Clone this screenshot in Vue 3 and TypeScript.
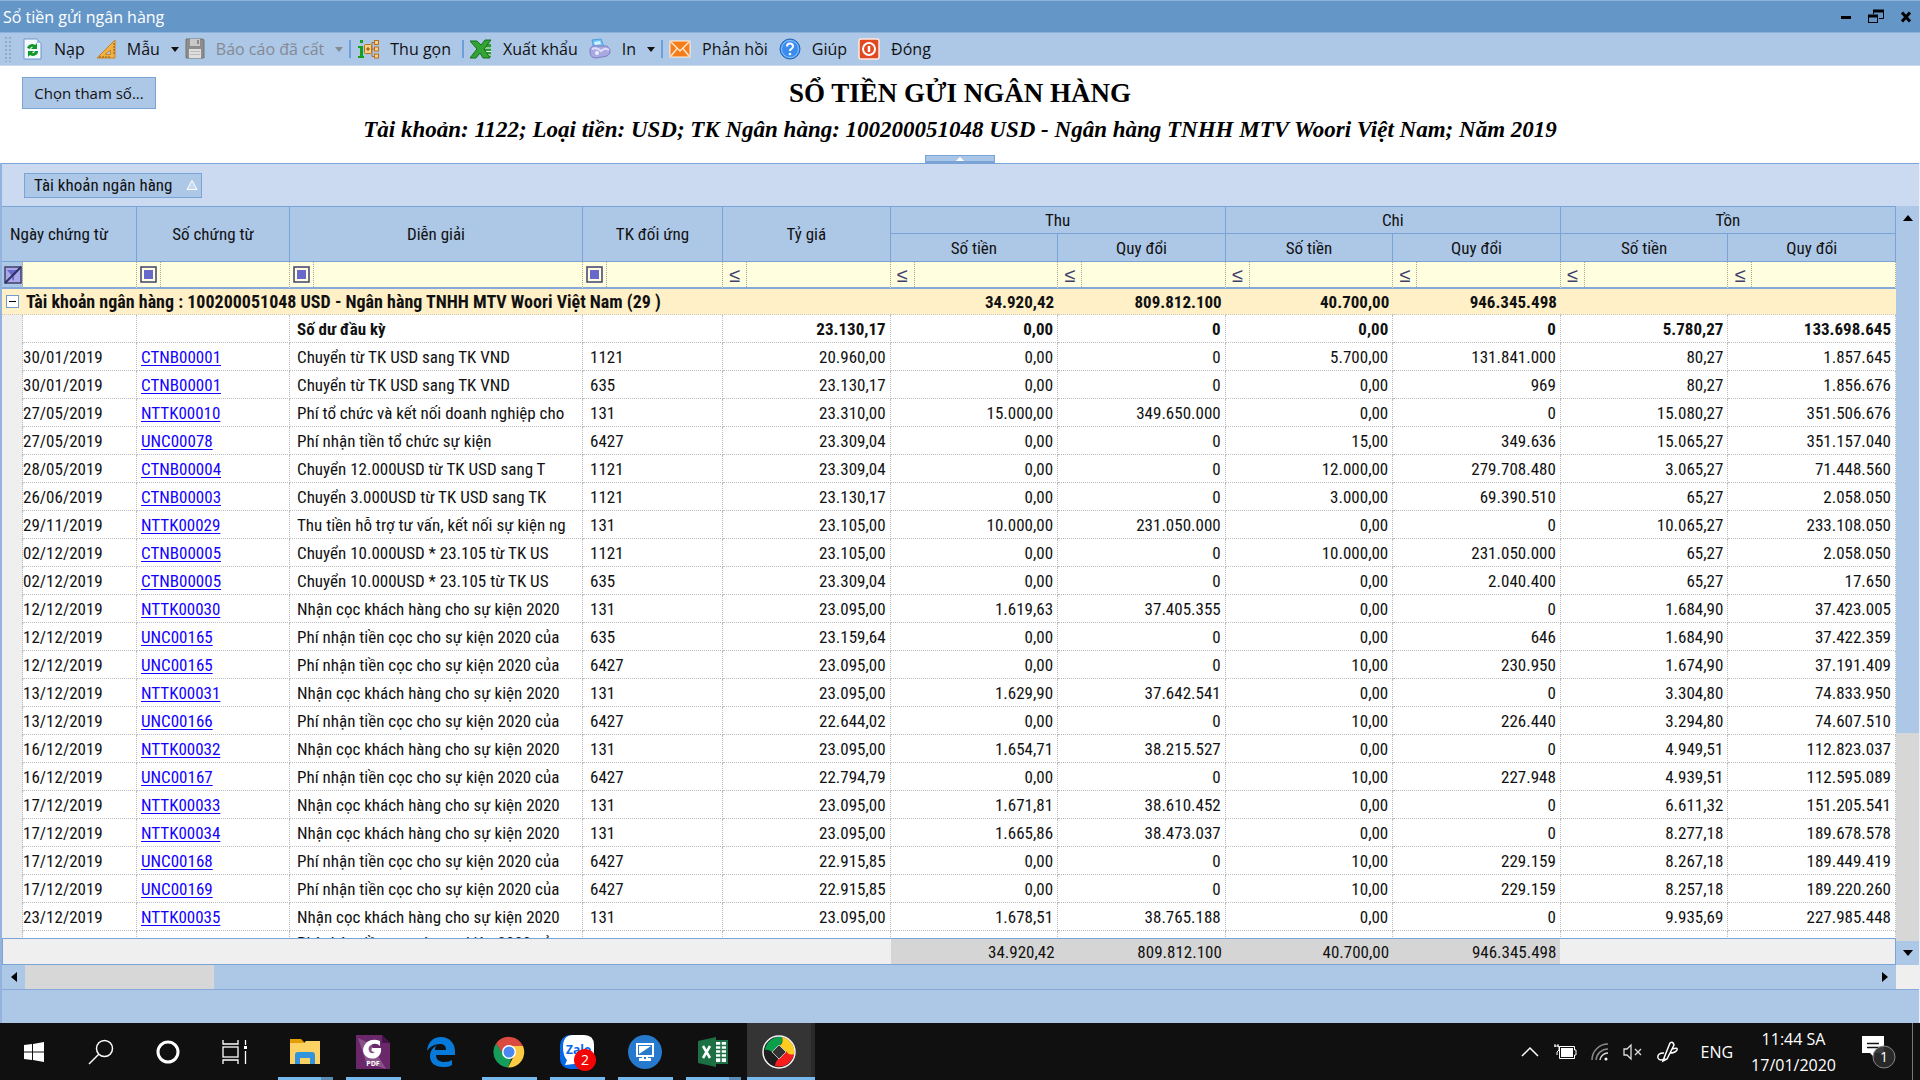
<script setup lang="ts">
interface Row {
  date: string
  doc: string
  desc: string
  account: string
  values: string[]
}

const line = (date: string, doc: string, desc: string, account: string, numbers: string): Row => ({
  date,
  doc,
  desc,
  account,
  values: numbers.split(' '),
})

const toUsd = 'Chuyển từ TK USD sang TK VND'
const deposit = 'Nhận cọc khách hàng cho sự kiện 2020'
const fee = 'Phí nhận tiền cọc cho sự kiện 2020 của'

const rows: Row[] = [
  line('30/01/2019', 'CTNB00001', toUsd, '1121', '20.960,00 0,00 0 5.700,00 131.841.000 80,27 1.857.645'),
  line('30/01/2019', 'CTNB00001', toUsd, '635', '23.130,17 0,00 0 0,00 969 80,27 1.856.676'),
  line('27/05/2019', 'NTTK00010', 'Phí tổ chức và kết nối doanh nghiệp cho', '131', '23.310,00 15.000,00 349.650.000 0,00 0 15.080,27 351.506.676'),
  line('27/05/2019', 'UNC00078', 'Phí nhận tiền tổ chức sự kiện', '6427', '23.309,04 0,00 0 15,00 349.636 15.065,27 351.157.040'),
  line('28/05/2019', 'CTNB00004', 'Chuyển 12.000USD từ TK USD sang T', '1121', '23.309,04 0,00 0 12.000,00 279.708.480 3.065,27 71.448.560'),
  line('26/06/2019', 'CTNB00003', 'Chuyển 3.000USD từ TK USD sang TK', '1121', '23.130,17 0,00 0 3.000,00 69.390.510 65,27 2.058.050'),
  line('29/11/2019', 'NTTK00029', 'Thu tiền hỗ trợ tư vấn, kết nối sự kiện ng', '131', '23.105,00 10.000,00 231.050.000 0,00 0 10.065,27 233.108.050'),
  line('02/12/2019', 'CTNB00005', 'Chuyển 10.000USD * 23.105 từ TK US', '1121', '23.105,00 0,00 0 10.000,00 231.050.000 65,27 2.058.050'),
  line('02/12/2019', 'CTNB00005', 'Chuyển 10.000USD * 23.105 từ TK US', '635', '23.309,04 0,00 0 0,00 2.040.400 65,27 17.650'),
  line('12/12/2019', 'NTTK00030', deposit, '131', '23.095,00 1.619,63 37.405.355 0,00 0 1.684,90 37.423.005'),
  line('12/12/2019', 'UNC00165', fee, '635', '23.159,64 0,00 0 0,00 646 1.684,90 37.422.359'),
  line('12/12/2019', 'UNC00165', fee, '6427', '23.095,00 0,00 0 10,00 230.950 1.674,90 37.191.409'),
  line('13/12/2019', 'NTTK00031', deposit, '131', '23.095,00 1.629,90 37.642.541 0,00 0 3.304,80 74.833.950'),
  line('13/12/2019', 'UNC00166', fee, '6427', '22.644,02 0,00 0 10,00 226.440 3.294,80 74.607.510'),
  line('16/12/2019', 'NTTK00032', deposit, '131', '23.095,00 1.654,71 38.215.527 0,00 0 4.949,51 112.823.037'),
  line('16/12/2019', 'UNC00167', fee, '6427', '22.794,79 0,00 0 10,00 227.948 4.939,51 112.595.089'),
  line('17/12/2019', 'NTTK00033', deposit, '131', '23.095,00 1.671,81 38.610.452 0,00 0 6.611,32 151.205.541'),
  line('17/12/2019', 'NTTK00034', deposit, '131', '23.095,00 1.665,86 38.473.037 0,00 0 8.277,18 189.678.578'),
  line('17/12/2019', 'UNC00168', fee, '6427', '22.915,85 0,00 0 10,00 229.159 8.267,18 189.449.419'),
  line('17/12/2019', 'UNC00169', fee, '6427', '22.915,85 0,00 0 10,00 229.159 8.257,18 189.220.260'),
  line('23/12/2019', 'NTTK00035', deposit, '131', '23.095,00 1.678,51 38.765.188 0,00 0 9.935,69 227.985.448'),
]

const opening: string[] = ['23.130,17', '0,00', '0', '0,00', '0', '5.780,27', '133.698.645']
const totals: string[] = ['34.920,42', '809.812.100', '40.700,00', '946.345.498', '', '']
const groups: string[] = ['Thu', 'Chi', 'Tồn']
const textFilters: string[] = ['Số chứng từ', 'Diễn giải', 'TK đối ứng']
const numberFilters: string[] = ['Tỷ giá', 'Thu số tiền', 'Thu quy đổi', 'Chi số tiền', 'Chi quy đổi', 'Tồn số tiền', 'Tồn quy đổi']
</script>

<template>
  <div class="desktop">
    <header class="titlebar">
      <span>Sổ tiền gửi ngân hàng</span>
      <div class="window-buttons">
        <button type="button" aria-label="Thu nhỏ">
          <svg width="18" height="18"><path d="M4 9.500H14" stroke="#000" stroke-width="3" /></svg>
        </button>
        <button type="button" aria-label="Khôi phục">
          <svg width="18" height="18" fill="none" stroke="#000">
            <path d="M6.500 6V3H16.500V10.500H12" /><path d="M6 3H17" stroke-width="3" />
            <rect x="1.500" y="7.500" width="9" height="7" /><path d="M1 8H11" stroke-width="3" />
          </svg>
        </button>
        <button type="button" aria-label="Đóng cửa sổ">
          <svg width="18" height="18"><path d="M5 4.500L13 13.500M13 4.500L5 13.500" stroke="#000" stroke-width="3" /></svg>
        </button>
      </div>
    </header>

    <nav class="toolbar">
      <span class="grip"></span>
      <button type="button">
        <svg width="20" height="22" viewBox="0 0 20 22">
          <path d="M1 1H14L18 5V21H1Z" fill="#f5faff" stroke="#6d94cf" />
          <path d="M14 1V5H18Z" fill="#9dbbe8" />
          <path d="M4 10A5 4.500 0 0 1 12 7L14 5V11H8L10 9Q8 8 7 11ZM15 13A5 4.500 0 0 1 7 17L5 19V13H11L9 15Q11 16 12 13Z" fill="#12972a" />
        </svg>
        Nạp
      </button>
      <button type="button" class="has-caret">
        <svg width="20" height="22" viewBox="0 0 20 22">
          <path d="M19 2V20H1Z" fill="#f1b043" stroke="#c98422" />
          <path d="M14.500 12V16.500H9Z" fill="#adc7e7" stroke="#c98422" />
          <path d="M4 20v-2M7 20v-2M10 20v-2M13 20v-2M17 6h2M17 9h2M17 12h2M17 15h2" stroke="#8a5a10" />
        </svg>
        Mẫu
        <i class="caret"></i>
      </button>
      <button type="button" class="has-caret" disabled>
        <svg width="20" height="22" viewBox="0 0 20 22">
          <path d="M1 1H18L19 2V20H1Z" fill="#8d8d8d" stroke="#747474" />
          <path d="M5 1H15V8H5Z" fill="#c9c9c9" /><path d="M12 2h2v4h-2z" fill="#8a8a8a" />
          <path d="M4 11H16V20H4Z" fill="#dedede" /><path d="M5 13.500H15M5 16.500H15" stroke="#bbb" />
        </svg>
        Báo cáo đã cất
        <i class="caret"></i>
      </button>
      <span class="divider"></span>
      <button type="button">
        <svg width="22" height="22" viewBox="0 0 22 22">
          <path d="M3 2h3v3H3zM1 8H6V18H7V20H1V18H3V10H1Z" fill="#15a01b" />
          <path d="M14 11H18M15 11V4.500H18M15 11V18.500H18" fill="none" stroke="#b86f1d" />
          <rect x="7.500" y="6.500" width="7" height="9" rx="1" fill="#f9d18b" stroke="#b86f1d" />
          <path d="M11 9v4M9 11h4" stroke="#8a4b08" />
          <g fill="#f9d18b" stroke="#b86f1d"><rect x="17.500" y="2.500" width="4" height="4" /><rect x="17.500" y="9" width="4" height="4" /><rect x="17.500" y="16" width="4" height="4" /></g>
        </svg>
        Thu gọn
      </button>
      <span class="divider"></span>
      <button type="button">
        <svg width="22" height="22" viewBox="0 0 22 22">
          <path d="M14 6H21V19H14Z" fill="#2f9a35" /><path d="M15 10h6M15 13.500h6M15 17h6" stroke="#e8ffe8" />
          <path d="M0 3H7L11 7L15 2H21L14 11L20 20H13L10 15L6 20H0L7 11Z" fill="#33a333" stroke="#15701c" />
        </svg>
        Xuất khẩu
      </button>
      <button type="button" class="has-caret">
        <svg width="22" height="22" viewBox="0 0 22 22">
          <path d="M3 2L12 1L15 9L5 11Z" fill="#6fc3f7" stroke="#4c9fe0" /><path d="M5 4l6-1 1 3-6 1z" fill="#d7f2ff" />
          <path d="M1 11Q3 7 8 8L18 8Q22 11 21 15Q19 19 13 19L7 20Q0 20 1 11Z" fill="#a9a9e2" stroke="#7f7fc2" />
          <path d="M3 11Q8 9 12 13Q16 9 20 12" fill="none" stroke="#dedefa" stroke-width="2" /><circle cx="8" cy="15" r="2" fill="#ececff" />
        </svg>
        In
        <i class="caret"></i>
      </button>
      <span class="divider"></span>
      <button type="button">
        <svg width="22" height="22" viewBox="0 0 22 22">
          <rect x="1" y="3" width="20" height="16" fill="#f57c1a" stroke="#fff3e2" />
          <path d="M2 4L11 13L20 4M2 18L8 10.500M20 18L14 10.500" fill="none" stroke="#ffe6c8" stroke-width="1.500" />
        </svg>
        Phản hồi
      </button>
      <button type="button">
        <svg width="22" height="22" viewBox="0 0 22 22">
          <circle cx="11" cy="11" r="10" fill="#3b8ded" stroke="#2463b5" /><circle cx="11" cy="11" r="8.500" fill="none" stroke="#8cc4ff" />
          <path d="M8 8.500Q8 5.500 11 5.500T14 8.300Q14 10 12.300 10.800Q11 11.500 11 13" fill="none" stroke="#fff" stroke-width="2" /><circle cx="11" cy="16" r="1.300" fill="#fff" />
        </svg>
        Giúp
      </button>
      <button type="button">
        <svg width="22" height="22" viewBox="0 0 22 22">
          <rect x="1" y="1" width="20" height="20" rx="2" fill="#e04a22" stroke="#ffe7de" stroke-width="1.500" />
          <circle cx="11" cy="11" r="6" fill="none" stroke="#fff" stroke-width="2" /><path d="M11 8V14" stroke="#fff" stroke-width="2.500" />
        </svg>
        Đóng
      </button>
    </nav>

    <section class="report-head">
      <button type="button" class="params">Chọn tham số...</button>
      <div class="titles">
        <h1>SỔ TIỀN GỬI NGÂN HÀNG</h1>
        <p>Tài khoản: 1122; Loại tiền: USD; TK Ngân hàng: 100200051048 USD - Ngân hàng TNHH MTV Woori Việt Nam; Năm 2019</p>
        <button type="button" class="collapse" aria-label="Thu gọn phần đầu"><i></i></button>
      </div>
    </section>

    <main class="sheet">
      <div class="group-panel">
        <button type="button" class="chip">
          Tài khoản ngân hàng
          <svg width="12" height="12"><path d="M6 1.500L11 10.500H1Z" fill="#c8daf2" stroke="#fff" /></svg>
        </button>
      </div>

      <div class="viewport">
        <div class="content">
          <div class="table-wrap">
            <table>
              <colgroup>
                <col class="c-gutter" /><col class="c-date" /><col class="c-doc" /><col class="c-desc" /><col class="c-acc" />
                <col v-for="n in 7" :key="n" />
              </colgroup>
              <thead>
                <tr class="h-top">
                  <th colspan="2" rowspan="2" class="first">Ngày chứng từ</th>
                  <th rowspan="2">Số chứng từ</th>
                  <th rowspan="2">Diễn giải</th>
                  <th rowspan="2">TK đối ứng</th>
                  <th rowspan="2">Tỷ giá</th>
                  <th v-for="g in groups" :key="g" colspan="2">{{ g }}</th>
                </tr>
                <tr class="h-sub">
                  <template v-for="g in groups" :key="g">
                    <th>Số tiền</th>
                    <th>Quy đổi</th>
                  </template>
                </tr>
                <tr class="filters">
                  <td class="clear">
                    <button type="button" aria-label="Xóa lọc">
                      <svg width="18" height="18">
                        <rect x="1" y="1" width="16" height="16" fill="#a9a9ea" stroke="#40406e" stroke-width="1.500" />
                        <path d="M3 4H15L10 10V15L8 13V10Z" fill="#6868c8" /><path d="M1 17L17 1" stroke="#303060" stroke-width="2" />
                      </svg>
                    </button>
                  </td>
                  <td><input type="text" aria-label="Lọc ngày chứng từ" /></td>
                  <td v-for="f in textFilters" :key="f">
                    <div class="filter">
                      <button type="button" :aria-label="'Kiểu lọc ' + f">
                        <svg width="17" height="17"><rect x="1" y="1" width="15" height="15" fill="none" stroke="#40406e" stroke-width="1.500" /><rect x="4" y="4" width="9" height="9" fill="#6868cc" /></svg>
                      </button>
                      <input type="text" :aria-label="'Lọc ' + f" />
                    </div>
                  </td>
                  <td v-for="f in numberFilters" :key="f">
                    <div class="filter">
                      <button type="button" :aria-label="'Kiểu lọc ' + f">≤</button>
                      <input type="text" :aria-label="'Lọc ' + f" />
                    </div>
                  </td>
                </tr>
              </thead>
              <tbody>
                <tr class="group">
                  <td colspan="6">
                    <div class="group-label">
                      <button type="button" aria-label="Thu gọn nhóm">
                        <svg width="13" height="13"><rect x="0.500" y="0.500" width="12" height="12" fill="#fff" stroke="#6f9bd1" /><path d="M3 6.500H10" stroke="#000" /></svg>
                      </button>
                      Tài khoản ngân hàng : 100200051048 USD - Ngân hàng TNHH MTV Woori Việt Nam (29 )
                    </div>
                  </td>
                  <td v-for="(t, i) in totals" :key="i" class="num">{{ t }}</td>
                </tr>
                <tr class="data opening">
                  <td class="gutter"></td>
                  <td></td>
                  <td></td>
                  <td class="text">Số dư đầu kỳ</td>
                  <td></td>
                  <td v-for="(v, i) in opening" :key="i" class="num">{{ v }}</td>
                </tr>
                <tr v-for="(r, i) in rows" :key="i" class="data">
                  <td class="gutter"></td>
                  <td>{{ r.date }}</td>
                  <td class="doc"><a href="#">{{ r.doc }}</a></td>
                  <td class="text">{{ r.desc }}</td>
                  <td class="text">{{ r.account }}</td>
                  <td v-for="(v, j) in r.values" :key="j" class="num">{{ v }}</td>
                </tr>
                <tr class="data partial">
                  <td class="gutter"></td>
                  <td></td>
                  <td></td>
                  <td class="text">{{ fee }}</td>
                  <td></td>
                  <td v-for="n in 7" :key="n"></td>
                </tr>
              </tbody>
            </table>
          </div>
          <table class="summary">
            <colgroup>
              <col class="c-gutter" /><col class="c-date" /><col class="c-doc" /><col class="c-desc" /><col class="c-acc" />
              <col v-for="n in 7" :key="n" />
            </colgroup>
            <tbody>
              <tr>
                <td colspan="6"></td>
                <td v-for="(t, i) in totals" :key="i" class="num" :class="{ filled: t }">{{ t }}</td>
              </tr>
            </tbody>
          </table>
          <div class="h-scroll">
            <button type="button" aria-label="Cuộn trái"><i class="left"></i></button>
            <span class="h-track"></span>
            <button type="button" aria-label="Cuộn phải"><i class="right"></i></button>
          </div>
        </div>
        <div class="v-scroll">
          <button type="button" aria-label="Cuộn lên"><i class="up"></i></button>
          <span class="v-thumb"></span>
          <span class="v-track"></span>
          <button type="button" aria-label="Cuộn xuống"><i class="down"></i></button>
          <span class="corner"></span>
        </div>
      </div>
    </main>

    <footer class="taskbar">
      <div class="system">
        <button type="button" aria-label="Start">
          <svg width="20" height="20" fill="#fff"><path d="M0 3L8 2V9.500H0ZM9 2L20 0V9.500H9ZM0 10.500H8V18L0 17ZM9 10.500H20V20L9 18Z" /></svg>
        </button>
        <button type="button" aria-label="Tìm kiếm">
          <svg width="26" height="26" fill="none" stroke="#fff" stroke-width="1.500"><circle cx="16.500" cy="9.500" r="8" /><path d="M11 15L1 25" /></svg>
        </button>
        <button type="button" aria-label="Cortana">
          <svg width="26" height="26"><circle cx="13" cy="13" r="10" fill="none" stroke="#fff" stroke-width="3" /></svg>
        </button>
        <button type="button" aria-label="Task View">
          <svg width="26" height="24" fill="none" stroke="#fff" stroke-width="1.300"><path d="M1 0V4H16V0M1 24V20H16V24M23.500 0V5M23.500 11V24" /><rect x="1" y="7" width="15" height="10" /><path d="M22 6h3v3h-3z" fill="#fff" stroke="none" /></svg>
        </button>
      </div>
      <div class="apps">
        <button type="button" class="open split" aria-label="File Explorer">
          <svg width="32" height="28" viewBox="0 0 32 28">
            <path d="M1 1H12L15 4H15V10H1Z" fill="#e39d06" /><path d="M1 5H15L17 3H31V26H1Z" fill="#fdd264" />
            <path d="M6 26V17Q6 14 9 14H23Q26 14 26 17V26H21V20H11V26Z" fill="#3294dc" />
          </svg>
        </button>
        <button type="button" class="open" aria-label="Foxit PDF">
          <svg width="34" height="34" viewBox="0 0 34 34">
            <path d="M0 0H26L34 8V34H0Z" fill="#6a276a" /><path d="M2 3L15 9L30 34L10 27Z" fill="#885288" /><path d="M26 0V8H34Z" fill="#471447" />
            <path d="M24 6Q17 3 11 7Q5 13 8 19Q12 25 20 23Q26 20 25 13H16Q14 17 19 17Q15 20 13 16Q11 11 17 9Q21 8 24 11Z" fill="#fff" />
            <text x="17" y="31" text-anchor="middle" fill="#fff" font-size="7" font-weight="700" font-family="Open Sans, sans-serif">PDF</text>
          </svg>
        </button>
        <button type="button" aria-label="Edge">
          <svg width="30" height="32" viewBox="0 0 30 32"><path d="M1 15C2 5 8 1 15 1C24 1 29 8 29 15V19H10C10 24 14 26 18 26C22 26 24 25 26 24V29C23 31 20 31 17 31C9 31 4 27 4 20C4 14 8 11 11 9C9 11 9 12 9 14H20C20 10 18 8 14 8C8 8 4 11 1 15Z" fill="#0779d8" /></svg>
        </button>
        <button type="button" class="open" aria-label="Chrome">
          <svg width="32" height="32" viewBox="0 0 32 32">
            <path d="M3 7.700A15.500 15.500 0 0 1 30 10H16A6 6 0 0 0 10.500 19Z" fill="#db4a3e" />
            <path d="M3 7.500L10.800 19A6 6 0 0 0 19 21L15 31.500A15.500 15.500 0 0 1 3 7.500Z" fill="#149e5a" />
            <path d="M30 10A15.500 15.500 0 0 1 15 31.500L21.300 19A6 6 0 0 0 16 10Z" fill="#fdcb41" />
            <circle cx="16" cy="16" r="7" fill="#fff" /><circle cx="16" cy="16" r="5.500" fill="#4a87f0" />
          </svg>
        </button>
        <button type="button" class="open" aria-label="Zalo">
          <svg width="40" height="40" viewBox="0 0 40 40">
            <rect x="3" y="3" width="33" height="34" rx="10" fill="#0568e8" /><path d="M16 3H27Q37 3 37 13V22Q37 32 27 32H17L8 33L10 28Q6 24 6 15Q6 3 16 3Z" fill="#fff" />
            <text x="9" y="22" fill="#0568e8" font-size="12" font-weight="700" font-family="Open Sans, sans-serif">Zalo</text>
            <circle cx="28" cy="28" r="11" fill="#f40505" />
            <text x="28" y="33" text-anchor="middle" fill="#fff" font-size="14" font-family="Open Sans, sans-serif">2</text>
          </svg>
        </button>
        <button type="button" class="open" aria-label="UltraViewer">
          <svg width="34" height="34" viewBox="0 0 34 34">
            <circle cx="17" cy="17" r="17" fill="#2679cc" /><path d="M9 9H25V21H9ZM15 21V24H12V25H22V24H19V21" fill="#2679cc" stroke="#fff" stroke-width="2" /><path d="M11 11H23L11 19Z" fill="#fff" />
          </svg>
        </button>
        <button type="button" class="open split" aria-label="Excel">
          <svg width="32" height="30" viewBox="0 0 32 30">
            <rect x="17" y="4" width="13" height="22" fill="#fff" stroke="#1d7044" stroke-width="2" />
            <path d="M18 8.500H29M18 12.500H29M18 16.500H29M18 20.500H29M24 5V25" stroke="#1d7044" stroke-width="1.500" /><path d="M1 4L19 0V30L1 26Z" fill="#1d7044" />
            <path d="M6 9L13 21M13 9L6 21" stroke="#fff" stroke-width="2.500" />
          </svg>
        </button>
        <button type="button" class="open active" aria-label="MISA">
          <svg width="34" height="34" viewBox="0 0 34 34">
            <circle cx="17" cy="17" r="16" fill="#1d1d1f" />
            <path d="M3 15A15 15 0 0 1 20 2Q22 7 16 12L10 17Q6 14 3 15Z" fill="#0aa04b" /><path d="M20 2A15 15 0 0 1 32 20Q28 22 24 18L17 11Q22 8 20 2Z" fill="#ffcb1f" />
            <path d="M32 19A15 15 0 0 1 13 31Q13 27 17 23L24 16Q27 21 32 19Z" fill="#f71d1d" />
            <path d="M17 10L24 17L17 24L10 17Z" fill="#333" stroke="#bbb" /><circle cx="17" cy="17" r="16" fill="none" stroke="#f5f5f5" stroke-width="1.500" />
          </svg>
        </button>
      </div>
      <div class="tray">
        <svg width="18" height="12" fill="none" stroke="#fff" stroke-width="1.500"><path d="M1 10L9 2L17 10" /></svg>
        <svg width="24" height="16" viewBox="0 0 24 16"><path d="M6.500 2.500H21.500V6H23V11H21.500V14.500H6.500Z" fill="none" stroke="#fff" /><path d="M8 4H20V13H8Z" fill="#fff" /><path d="M1 2H6V6L4 8V11M2 0V3M5 0V3" fill="#111" stroke="#fff" /></svg>
        <svg width="18" height="18" fill="none" stroke="#8a8a8a" stroke-width="1.500"><path d="M1 17A16 16 0 0 1 17 1" /><path d="M5 17A12 12 0 0 1 17 6" /><path d="M9 17A8 8 0 0 1 17 10" stroke="#ddd" /><circle cx="15" cy="16" r="1.500" fill="#fff" stroke="none" /></svg>
        <svg width="20" height="18" fill="none" stroke="#ddd" stroke-width="1.300"><path d="M1 6H4L8 2V16L4 12H1ZM12 6L18 12M18 6L12 12" /></svg>
        <svg width="22" height="22" fill="none" stroke="#fff" stroke-width="1.500"><path d="M7 17L13 2Q16 0 17 4L10 18L6 20ZM7 12Q0 12 1 17Q3 21 8 17M15 8Q21 6 20 9Q18 12 13 12" /></svg>
        <span class="lang">ENG</span>
        <div class="clock"><span>11:44 SA</span><span>17/01/2020</span></div>
        <button type="button" class="notice" aria-label="Thông báo">
          <svg width="34" height="34" viewBox="0 0 34 34">
            <path d="M0 1H22V18H13V23L8 18H0Z" fill="#fff" /><path d="M5 8.500H17M5 12.500H17" stroke="#111" stroke-width="1.500" />
            <circle cx="22" cy="22" r="11" fill="#2b2b2b" fill-opacity="0.920" stroke="#888" />
            <text x="22" y="27" text-anchor="middle" fill="#fff" font-size="14" font-family="Open Sans, sans-serif">1</text>
          </svg>
        </button>
      </div>
    </footer>
  </div>
</template>

<style>
body {
  margin: 0;
  background: #adc7e7;
}
</style>

<style scoped>
* {
  box-sizing: border-box;
}

.desktop {
  display: flex;
  flex-direction: column;
  height: 100vh;
  font-family: 'Open Sans', 'Noto Sans', sans-serif;
  font-size: 16px;
  color: #111;
}

button {
  margin: 0;
  padding: 0;
  border: 0;
  background: none;
  font: inherit;
  color: inherit;
}

svg {
  display: block;
  flex: none;
}

.titlebar {
  display: flex;
  flex: none;
  justify-content: space-between;
  align-items: center;
  height: 32px;
  padding: 0 5px 0 3px;
  border-top: 1px solid #8db3dd;
  background: #6496c8;
  color: #fff;
}

.window-buttons {
  display: flex;
  gap: 12px;
}

.toolbar {
  display: flex;
  flex: none;
  align-items: center;
  height: 34px;
  padding-left: 4px;
  border-top: 1px solid #8db1dc;
  border-bottom: 1px solid #cbdcf1;
  background: #adc7e7;
}

.toolbar button {
  display: flex;
  align-items: center;
  gap: 11px;
  margin-right: 11px;
  white-space: nowrap;
}

.toolbar .has-caret {
  margin-right: 6px;
}

.toolbar button:disabled {
  color: #848a94;
}

.grip {
  width: 8px;
  height: 26px;
  margin-right: 11px;
  background: radial-gradient(circle, #93a9c6 1px, transparent 1px) 0 0 / 4px 4px;
}

.caret {
  border: 4px solid transparent;
  border-top: 5px solid currentColor;
  border-bottom: 0;
}

.divider {
  width: 2px;
  height: 18px;
  margin-right: 6px;
  background: #6e9fdb;
}

.report-head {
  display: grid;
  flex: none;
  grid-template-columns: 1fr max-content 1fr;
  align-items: start;
  height: 97px;
  background: #fff;
}

.params {
  justify-self: start;
  width: 134px;
  height: 32px;
  margin: 11px 0 0 22px;
  border: 1px solid #7ba4d6;
  background: #adc7e7;
  font-size: 15px;
}

.titles {
  display: flex;
  flex-direction: column;
  align-items: center;
  height: 97px;
  padding-top: 11px;
  font-family: 'Liberation Serif', serif;
  color: #000;
}

.titles h1 {
  margin: 0;
  font-size: 27px;
  line-height: 32px;
}

.titles p {
  margin: 7px 0 0;
  font-size: 23px;
  font-style: italic;
  font-weight: 700;
  line-height: 28px;
}

.collapse {
  display: flex;
  justify-content: center;
  align-items: center;
  width: 70px;
  height: 8px;
  margin-top: auto;
  border: 1px solid #7ba4d6;
  border-bottom-width: 2px;
  background: #a9c6e9;
}

.collapse i {
  border: 4px solid transparent;
  border-top: 0;
  border-bottom: 4px solid #fff;
}

.sheet {
  display: flex;
  flex: 1;
  flex-direction: column;
  min-height: 0;
  padding-bottom: 33px;
  border-left: 2px solid #93b3de;
  border-right: 1px solid #e8eff8;
  background: #adc7e7;
  font-family: 'Roboto Condensed', 'Liberation Sans', sans-serif;
  font-size: 17px;
}

.group-panel {
  display: flex;
  flex: none;
  align-items: center;
  height: 43px;
  padding-left: 22px;
  border-top: 1px solid #7ba4d6;
  background: #cbdaf1;
}

.chip {
  display: flex;
  align-items: center;
  justify-content: space-between;
  width: 178px;
  height: 25px;
  padding: 0 3px 0 9px;
  border: 1px solid #7ba4d6;
  background: #adc7e7;
}

.viewport {
  display: flex;
  flex: 1;
  min-height: 0;
  border-bottom: 1px solid #86a9d9;
}

.content {
  display: flex;
  flex: 1;
  flex-direction: column;
  min-width: 0;
}

.table-wrap {
  flex: 1;
  min-height: 0;
  overflow: hidden;
  background: #fff;
}

table {
  width: 100%;
  table-layout: fixed;
  border-collapse: separate;
  border-spacing: 0;
}

.c-gutter {
  width: 21px;
}

.c-date {
  width: 114px;
}

.c-doc {
  width: 153px;
}

.c-desc {
  width: 293px;
}

.c-acc {
  width: 140px;
}

th,
td {
  padding: 0;
  overflow: hidden;
  white-space: nowrap;
  line-height: 20px;
}

th {
  border-top: 1px solid #7ba4d6;
  border-right: 1px solid #7ba4d6;
  background: #adc7e7;
  font-weight: 400;
}

th.first {
  padding-left: 8px;
  text-align: left;
}

.h-top {
  height: 27px;
}

.h-sub {
  height: 28px;
}

.filters {
  height: 28px;
}

.filters td {
  border-top: 1px solid #7ba4d6;
  border-right: 1px dotted #a5a59a;
  border-bottom: 2px solid #86a9d9;
  background: #ffffe0;
}

.filters .clear {
  background: #adc7e7;
}

.clear button {
  display: flex;
  align-items: center;
  height: 25px;
  padding-left: 2px;
}

.filters input {
  display: block;
  width: 100%;
  min-width: 0;
  height: 25px;
  padding: 0 4px;
  border: 0;
  outline: 0;
  background: transparent;
  font: inherit;
}

.filter {
  display: flex;
}

.filter button {
  display: flex;
  flex: none;
  justify-content: center;
  align-items: center;
  width: 24px;
  height: 25px;
  border-right: 1px dotted #a5a59a;
  color: #40406e;
  font-family: 'Liberation Sans', sans-serif;
  font-size: 20px;
}

.group {
  height: 26px;
  font-weight: 700;
}

.group td {
  border-bottom: 1px dotted #c8c8c8;
  background: #fff0c8;
}

.group-label {
  display: flex;
  align-items: center;
  gap: 7px;
  padding-left: 4px;
  font-size: 18px;
}

.data {
  height: 28px;
}

.data td {
  border-right: 1px dotted #bdbdbd;
  border-bottom: 1px dotted #bdbdbd;
}

.data .gutter {
  border-bottom: 0;
  background: #efefef;
}

.opening {
  font-weight: 700;
}

.text {
  padding-left: 7px;
}

.doc {
  padding-left: 4px;
}

.doc a {
  color: #1400ff;
  text-underline-offset: 2px;
}

.num {
  padding-right: 4px;
  text-align: right;
}

.partial td {
  vertical-align: top;
  line-height: 24px;
}

.summary {
  flex: none;
  height: 27px;
  border: 1px solid #7ba4d6;
  background: #efefef;
}

.summary .filled {
  background: #d5d5d5;
}

.h-scroll {
  display: flex;
  flex: none;
  height: 24px;
}

.h-scroll button,
.v-scroll button {
  display: flex;
  flex: none;
  justify-content: center;
  align-items: center;
  width: 23px;
  height: 24px;
}

.h-track {
  width: 10%;
  margin-right: auto;
  background: #d7d7d7;
}

.h-scroll i,
.v-scroll i {
  border: 5px solid transparent;
}

.h-scroll .left {
  border-left: 0;
  border-right: 6px solid #000;
}

.h-scroll .right {
  border-right: 0;
  border-left: 6px solid #000;
}

.v-scroll .up {
  border-top: 0;
  border-bottom: 6px solid #000;
}

.v-scroll .down {
  border-bottom: 0;
  border-top: 6px solid #000;
}

.v-scroll {
  display: flex;
  flex: none;
  flex-direction: column;
  width: 23px;
}

.v-thumb {
  flex: 504;
}

.v-track {
  flex: 208;
  background: #d7d7d7;
}

.corner {
  height: 24px;
  background: #efefef;
}

.taskbar {
  display: flex;
  flex: none;
  height: 57px;
  background: #101010;
  color: #fff;
}

.system,
.apps {
  display: flex;
}

.system button {
  display: grid;
  place-items: center;
  width: 67px;
}

.apps {
  margin-left: 3px;
}

.apps button {
  display: grid;
  position: relative;
  place-items: center;
  width: 68px;
}

.apps .open::after {
  content: '';
  position: absolute;
  right: 6px;
  bottom: 0;
  left: 7px;
  height: 3px;
  background: #76b9ed;
}

.apps .split::after {
  background: linear-gradient(to right, #76b9ed 43px, #5c8db5 43px);
}

.apps .active {
  border-right: 4px solid #2a2a2a;
  background: #343434;
}

.apps .active::after {
  right: -4px;
  left: 0;
}

.tray {
  display: flex;
  align-items: center;
  gap: 14px;
  margin-left: auto;
  padding-right: 7px;
}

.lang {
  margin-left: 8px;
}

.clock {
  display: flex;
  flex-direction: column;
  align-items: center;
  margin-left: 4px;
  line-height: 26px;
}

.notice {
  display: flex;
  align-items: center;
  height: 57px;
  margin-left: 12px;
  padding-right: 16px;
  border-right: 1px solid #777;
}
</style>
